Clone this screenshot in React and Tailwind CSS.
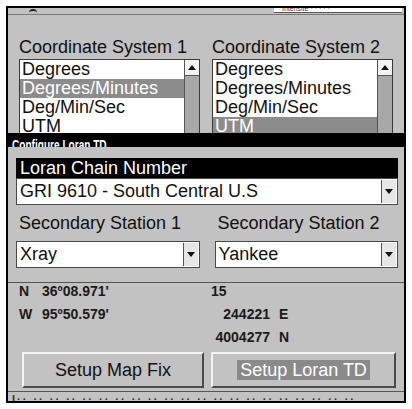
import React from "react";

// Petit triangle pour les boutons de liste
const Arrow = ({ up }) => (
  <svg width="8" height="5" viewBox="0 0 8 5">
    <polygon points={up ? "0,5 8,5 4,0" : "0,0 8,0 4,5"} fill="#111" />
  </svg>
);

const ListBox = ({ items, selected }) => (
  <div className="h-[90px] bg-white border border-[#3a3a3a] flex">
    <div className="flex-1 pl-[2px]">
      {items.map((item) => (
        <div
          key={item}
          className={
            "text-[18px] leading-[19px] -ml-[2px] pl-[2px] " +
            (item === selected ? "bg-[#8c8c8c] text-white" : "text-[#111]")
          }
        >
          {item}
        </div>
      ))}
    </div>
    <div className="w-[15px] bg-[#a8a8a8] border-l border-[#555] flex flex-col">
      <div className="h-[16px] bg-[#f2f2f2] border-b border-[#555] flex items-center justify-center">
        <Arrow up />
      </div>
    </div>
  </div>
);

const Select = ({ value }) => (
  <div className="h-[27px] bg-white border border-[#4a4a4a] flex">
    <div className="flex-1 text-[18px] leading-[25px] pl-[3px] text-[#111] whitespace-nowrap overflow-hidden">
      {value}
    </div>
    <div className="w-[15px] my-[1px] mr-[1px] bg-[#e6e6e6] border-l border-[#555] flex items-center justify-center">
      <Arrow />
    </div>
  </div>
);

const coords = ["Degrees", "Degrees/Minutes", "Deg/Min/Sec", "UTM"];

export default function App() {
  return (
    <div
      className="w-[412px] h-[409px] bg-white pt-[6px] pl-[6px]"
      style={{ fontFamily: '"Liberation Sans", Arial, sans-serif' }}
    >
      <div className="w-[400px] h-[397px] border-2 border-black bg-[#c2c2c2] flex flex-col overflow-hidden">
        {/* Bande du haut */}
        <div className="h-[7px] relative border-b border-[#7a7a7a] shrink-0">
          <div className="absolute left-[21px] top-[1px] w-[8px] h-[4px] border-t-2 border-[#222] rounded-t-full" />
          <div className="absolute left-[266px] top-0 w-[128px] h-[5px] bg-white border-b border-[#555] overflow-hidden">
            <div className="text-[7px] leading-[7px] text-[#444] pl-[8px] -mt-[3px]">Intensité · · · · ·</div>
          </div>
        </div>

        {/* Systèmes de coordonnées */}
        <div className="h-[118px] shrink-0 overflow-hidden px-[11px] pt-[22px] grid grid-cols-2 gap-[12px]">
          <div>
            <div className="text-[18px] leading-[21px] text-[#111] mb-[1px]">Coordinate System 1</div>
            <ListBox items={coords} selected="Degrees/Minutes" />
          </div>
          <div>
            <div className="text-[18px] leading-[21px] text-[#111] mb-[1px]">Coordinate System 2</div>
            <ListBox items={coords} selected="UTM" />
          </div>
        </div>

        {/* Barre de titre */}
        <div className="h-[14px] shrink-0 bg-black text-white pl-[4px] overflow-hidden">
          <span className="inline-block origin-left scale-x-[0.72] text-[14px] leading-[14px] font-bold whitespace-nowrap">
            Configure Loran TD
          </span>
        </div>

        {/* Dialogue Loran */}
        <div className="h-[136px] shrink-0 border-b border-[#555] pl-[8px] pr-[6px] pt-[11px]">
          <div className="h-[20px] bg-black text-white text-[18px] leading-[20px] pl-[4px]">Loran Chain Number</div>
          <div>
            <Select value="GRI 9610 - South Central U.S" />
          </div>
          <div className="grid grid-cols-2 gap-[15px] mt-[8px]">
            <div>
              <div className="text-[18px] leading-[21px] text-[#111] pl-[3px] mb-[7px]">Secondary Station 1</div>
              <Select value="Xray" />
            </div>
            <div>
              <div className="text-[18px] leading-[21px] text-[#111] pl-[3px] mb-[7px]">Secondary Station 2</div>
              <Select value="Yankee" />
            </div>
          </div>
        </div>

        {/* Position actuelle */}
        <div className="h-[69px] shrink-0 flex text-[14px] leading-[16px] font-bold text-[#1a1a1a]">
          <div className="w-[203px] pl-[11px]">
            <div className="h-[23px] flex">
              <span className="w-[23px]">N</span>
              <span>36º08.971'</span>
            </div>
            <div className="h-[23px] flex">
              <span className="w-[23px]">W</span>
              <span>95º50.579'</span>
            </div>
          </div>
          <div>
            <div className="h-[23px]">15</div>
            <div className="h-[23px] flex">
              <span className="w-[59px] text-right">244221</span>
              <span className="ml-[9px]">E</span>
            </div>
            <div className="h-[23px] flex">
              <span className="w-[59px] text-right">4004277</span>
              <span className="ml-[9px]">N</span>
            </div>
          </div>
        </div>

        {/* Boutons */}
        <div className="h-[36px] shrink-0 flex gap-[7px] ml-[14px]">
          <div className="w-[182px] h-[36px] border-2 border-t-[#f4f4f4] border-l-[#f4f4f4] border-b-[#4a4a4a] border-r-[#4a4a4a] flex items-center justify-center text-[18px] text-[#111]">
            Setup Map Fix
          </div>
          <div className="w-[185px] h-[36px] border-2 border-t-[#f4f4f4] border-l-[#f4f4f4] border-b-[#4a4a4a] border-r-[#4a4a4a] flex items-center justify-center text-[18px]">
            <span className="bg-[#8a8a8a] text-white px-[3px] leading-[20px]">Setup Loran TD</span>
          </div>
        </div>

        {/* Bande du bas */}
        <div className="mt-[3px] flex-1 border-t border-[#555] overflow-hidden pl-[4px]">
          <div className="text-[11px] leading-[11px] font-bold text-[#333] whitespace-nowrap mt-[2px] tracking-[2px]">
            I·· ·· ·· ·· ·· ·· ·· ·· ·· ·· ·· ·· ·· ·· ·· ·· ·· ·· ·· ·· ··
          </div>
        </div>
      </div>
    </div>
  );
}
